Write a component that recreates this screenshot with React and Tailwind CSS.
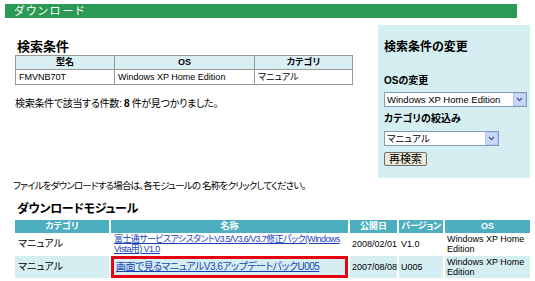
import React from "react";

const font = "font-['Liberation_Sans','Noto_Sans_CJK_JP',sans-serif] [font-feature-settings:'palt']";

function Select({ value, width }) {
  return (
    <div className={`flex items-center h-[15px] bg-white border border-[#7f9db9] ${width}`}>
      <div className="flex-1 pl-[2px] text-[9.5px] leading-none text-black whitespace-nowrap overflow-hidden">{value}</div>
      <div className="w-[13px] h-[13px] bg-[#c9d7fb] border border-[#b7c7f5] flex items-center justify-center">
        <svg width="7" height="5" viewBox="0 0 7 5">
          <path d="M1 1 L3.5 3.5 L6 1" stroke="#4d6185" strokeWidth="1.4" fill="none" />
        </svg>
      </div>
    </div>
  );
}

export default function App() {
  return (
    <div className={`w-[535px] h-[281px] bg-white overflow-hidden text-black ${font}`}>
      <div className="ml-[5px] mt-[4px] w-[512px] h-[14px] bg-[#2b9a55] flex items-center pl-[9px] text-white text-[11px] tracking-[2px] leading-none">
        ダウンロード
      </div>

      <div className="flex mt-[7px]">
        <div className="pl-[15px] w-[363px] pt-[15px]">
          <div className="text-[13px] leading-none font-bold pl-[2px]">検索条件</div>
          <table className="mt-[2px] w-[338px] border-collapse text-[9px] leading-none">
            <thead>
              <tr className="bg-[#d9eff3] h-[14px]">
                <th className="border border-[#999] w-[99px] font-bold">型名</th>
                <th className="border border-[#999] w-[140px] font-bold">OS</th>
                <th className="border border-[#999] font-bold">カテゴリ</th>
              </tr>
            </thead>
            <tbody>
              <tr className="h-[15px]">
                <td className="border border-[#999] pl-[3px]">FMVNB70T</td>
                <td className="border border-[#999] pl-[3px]">Windows XP Home Edition</td>
                <td className="border border-[#999] pl-[3px]">マニュアル</td>
              </tr>
            </tbody>
          </table>
          <div className="mt-[14px] text-[10px] tracking-[-0.3px] leading-none">検索条件で該当する件数: <span className="font-bold">8</span> 件が見つかりました。</div>
        </div>

        <div className="ml-[15px] w-[152px] h-[153px] bg-[#d5eef2] pl-[6px] pt-[16px]">
          <div className="text-[12px] leading-none font-bold">検索条件の変更</div>
          <div className="mt-[23px] text-[10px] leading-none font-bold">OSの変更</div>
          <div className="mt-[6px]"><Select value="Windows XP Home Edition" width="w-[143px]" /></div>
          <div className="mt-[7px] text-[10px] leading-none font-bold">カテゴリの絞込み</div>
          <div className="mt-[7px]"><Select value="マニュアル" width="w-[115px]" /></div>
          <button className="mt-[6px] h-[14px] px-[4px] bg-[#ece9d8] border border-[#6d6d6d] rounded-[2px] text-[11px] leading-none flex items-center">再検索</button>
        </div>
      </div>

      <div className="pl-[13px] mt-[3px] text-[9.5px] tracking-[-0.8px] leading-none whitespace-nowrap">ファイルをダウンロードする場合は、各モジュールの 名称をクリックしてください。</div>
      <div className="pl-[17px] mt-[12px] text-[12px] tracking-[-0.3px] leading-none font-bold">ダウンロードモジュール</div>

      <table className="ml-[13px] mt-[4px] w-[519px] border-separate [border-spacing:2px_1px] text-[9px] leading-[10px] table-fixed">
        <thead>
          <tr className="bg-[#4daebf] text-white h-[13px]">
            <th className="w-[94px] font-bold">カテゴリ</th>
            <th className="w-[237px] font-bold">名称</th>
            <th className="w-[47px] font-bold">公開日</th>
            <th className="w-[44px] font-bold whitespace-nowrap tracking-[-0.5px]">バージョン</th>
            <th className="font-bold">OS</th>
          </tr>
        </thead>
        <tbody>
          <tr className="h-[21px]">
            <td className="pl-[3px] text-[10px]">マニュアル</td>
            <td className="pl-[3px] whitespace-nowrap overflow-hidden"><a className="text-[#1a3fb8] underline tracking-[-0.6px]">富士通サービスアシスタントV3.5/V3.6/V3.7修正パック(Windows<br />Vista用) V1.0</a></td>
            <td className="pl-[2px] whitespace-nowrap">2008/02/01</td>
            <td className="pl-[2px]">V1.0</td>
            <td className="pl-[2px] whitespace-nowrap">Windows XP Home<br />Edition</td>
          </tr>
          <tr className="h-[22px] bg-[#d5eef2]">
            <td className="pl-[3px] text-[10px]">マニュアル</td>
            <td className="border-[3px] border-[#e60012] pl-[2px] whitespace-nowrap"><a className="text-[#1a3fb8] underline text-[10px] tracking-[-0.5px]">画面で見るマニュアルV3.6アップデートパックU005</a></td>
            <td className="pl-[2px] whitespace-nowrap">2007/08/08</td>
            <td className="pl-[2px]">U005</td>
            <td className="pl-[2px] whitespace-nowrap">Windows XP Home<br />Edition</td>
          </tr>
        </tbody>
      </table>
    </div>
  );
}
